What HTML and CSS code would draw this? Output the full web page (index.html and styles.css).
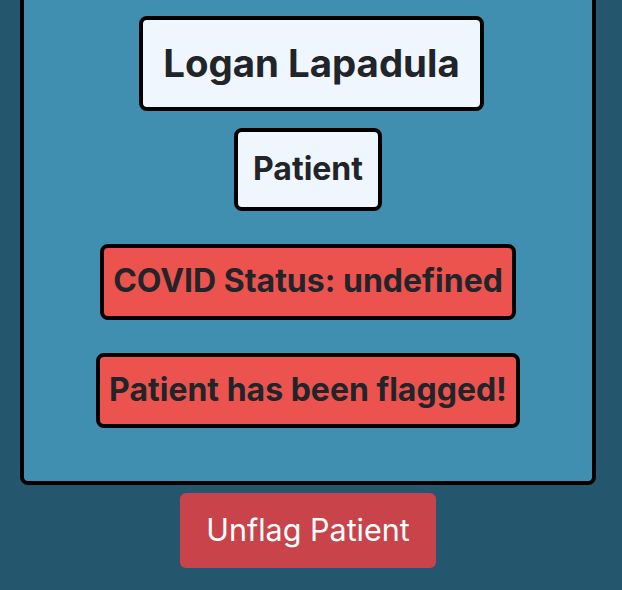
FILE: index.html
```html
<!DOCTYPE html>
<html lang="en">
<head>
    <meta charset="UTF-8">
    <meta name="viewport" content="width=device-width, initial-scale=1.0">
    <title>Patient</title>
    <link rel="stylesheet" href="styles.css">
</head>
<body>
    <div class="patient-card">
        <div class="tag name-tag">Logan Lapadula</div>
        <div class="tag role-tag">Patient</div>
        <div class="tag alert-tag covid-tag">COVID Status: undefined</div>
        <div class="tag alert-tag flag-tag">Patient has been flagged!</div>
    </div>
    <div class="actions">
        <button class="btn-unflag">Unflag Patient</button>
    </div>
</body>
</html>
```

FILE: styles.css
```css
body {
    margin: 0;
    background: #24566e;
    font-family: Inter, 'Noto Sans', sans-serif;
    color: #212529;
    min-height: 100vh;
}
.patient-card {
    margin: -40px 26px 0 20px;
    padding: 52px 0 53px;
    background: #408eb0;
    border: 4px solid #000;
    border-radius: 8px;
    display: flex;
    flex-direction: column;
    align-items: center;
}
.tag {
    background: #f0f6fe;
    border: 4px solid #000;
    border-radius: 8px;
    font-weight: 700;
    line-height: 1.2;
}
.name-tag {
    font-size: 38.4px;
    padding: 20px 20px 21px;
    margin-left: 7px;
}
.role-tag {
    font-size: 32px;
    margin-top: 17px;
    padding: 18px 15px 19px;
}
.alert-tag {
    background: #ec534f;
    font-size: 32px;
    padding: 14px 9px 15px;
    margin-top: 33px;
}
.actions {
    display: flex;
    justify-content: center;
    padding: 8px 6px 0 0;
}
.btn-unflag {
    background: #c9434b;
    color: #fff;
    border: none;
    border-radius: 6px;
    font-family: Inter, 'Noto Sans', sans-serif;
    font-size: 30.5px;
    line-height: 1.2;
    padding: 19px 26px;
    cursor: pointer;
}
```
